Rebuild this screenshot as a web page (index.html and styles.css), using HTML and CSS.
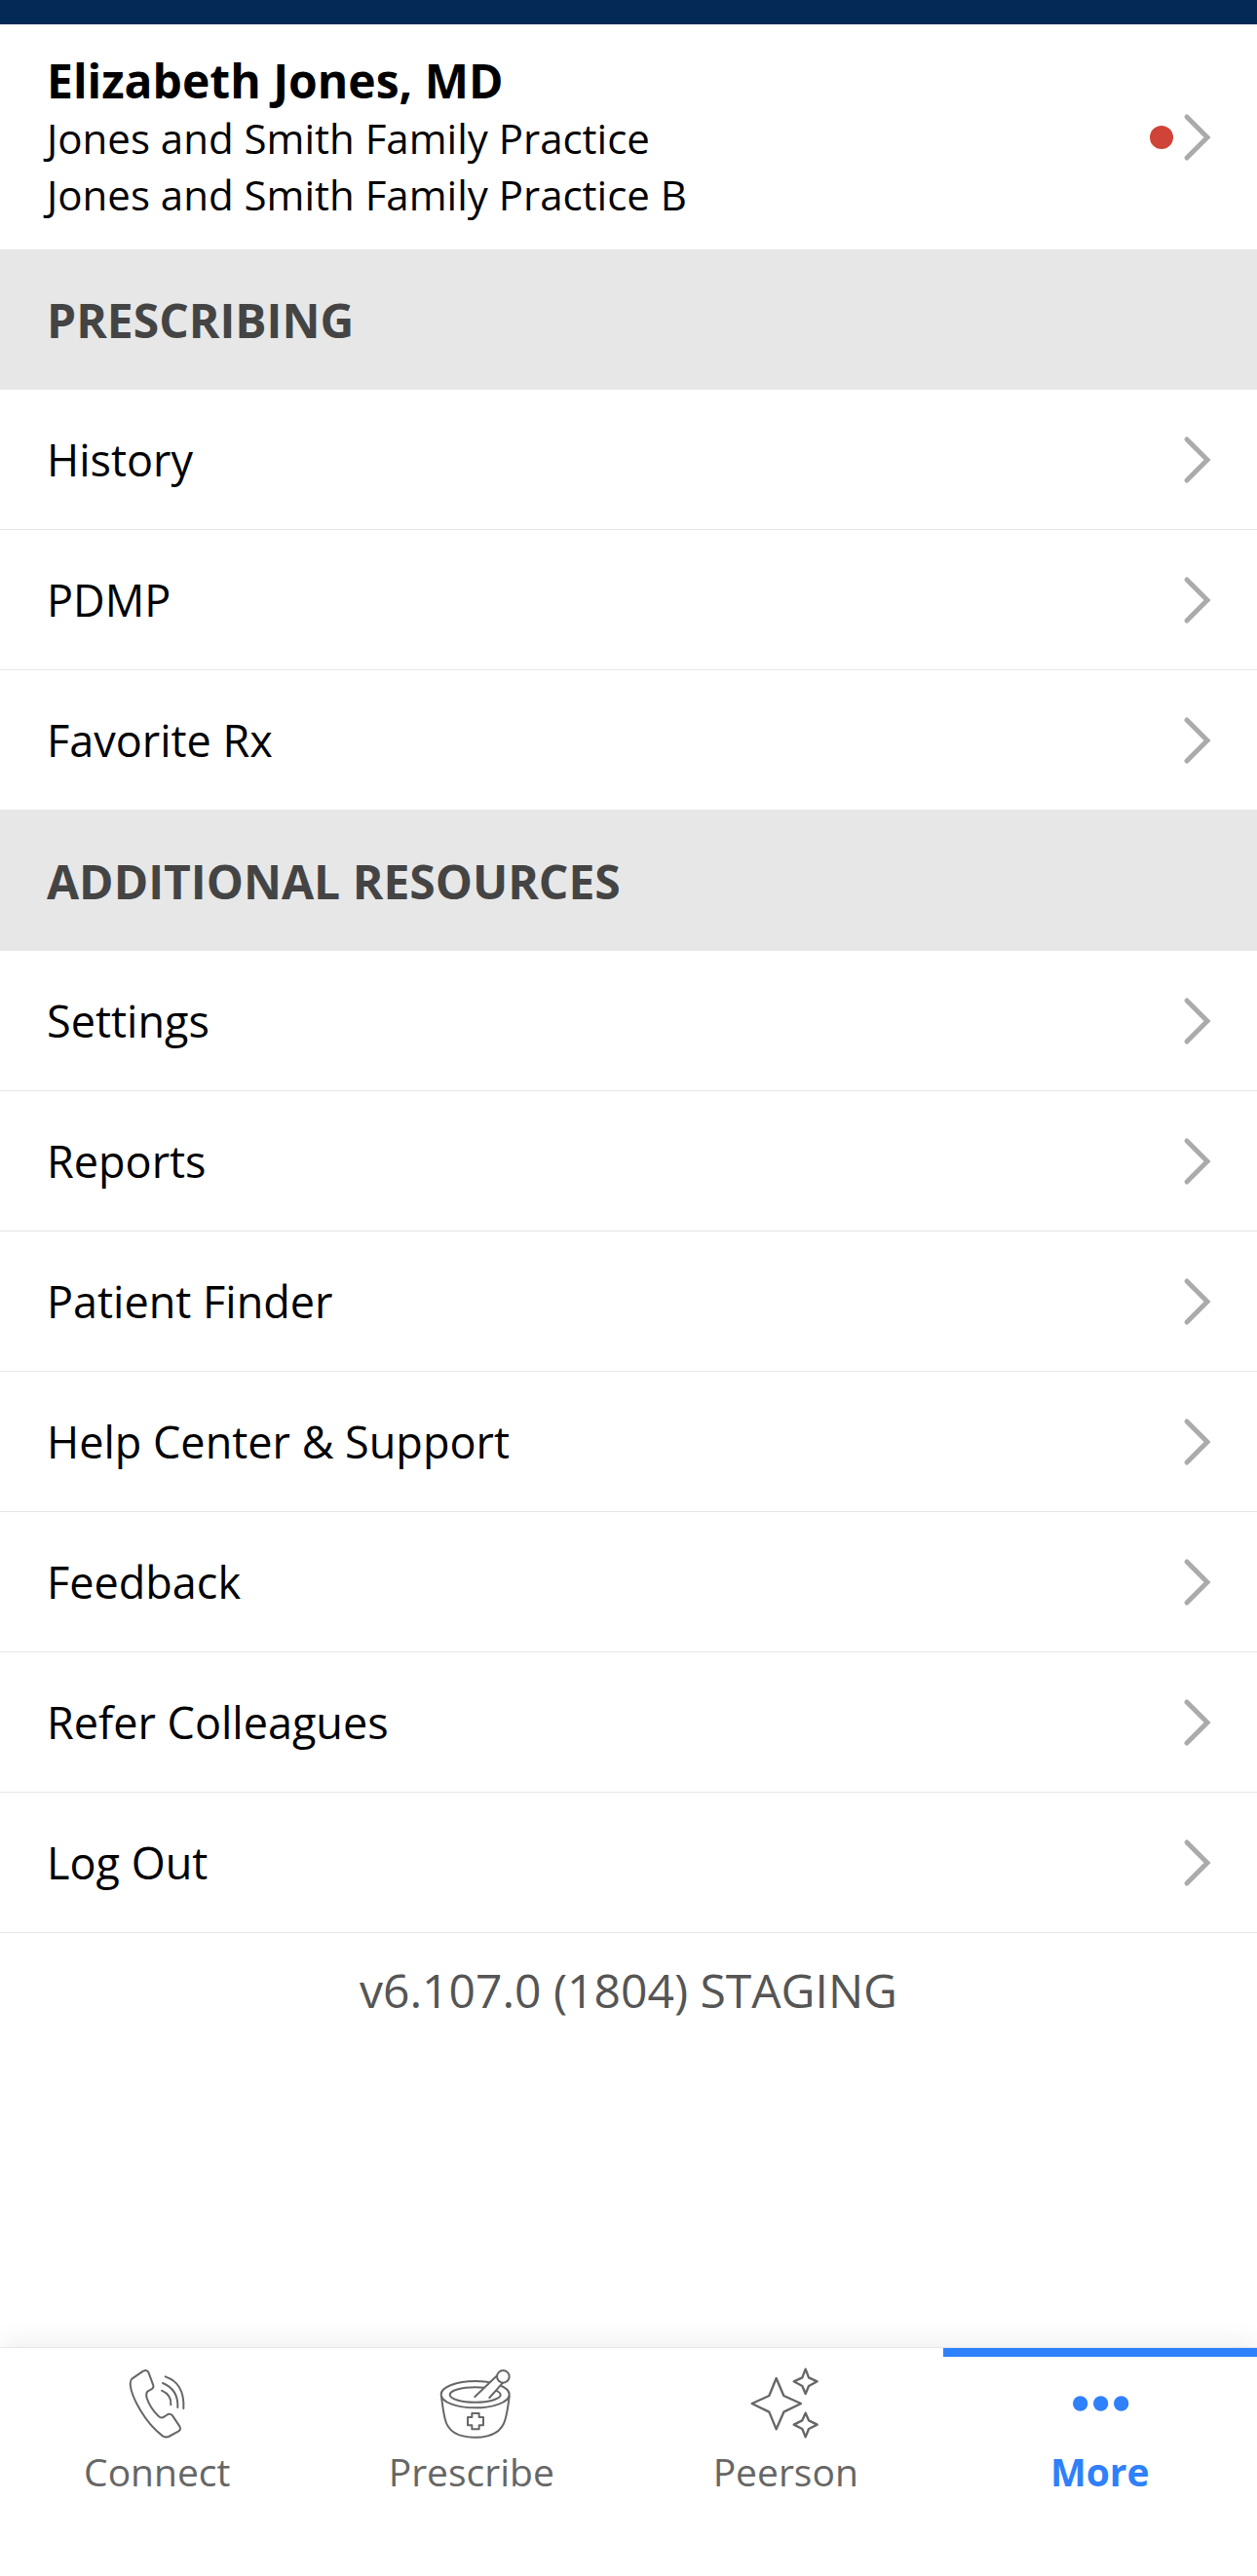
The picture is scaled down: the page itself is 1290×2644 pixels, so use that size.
FILE: index.html
```html
<!DOCTYPE html>
<html lang="en">
<head>
<meta charset="utf-8">
<title>More</title>
<link rel="stylesheet" href="styles.css">
</head>
<body>
<svg class="defs" width="0" height="0" aria-hidden="true"><defs>
<symbol id="chev" viewBox="0 0 34 52"><path d="M5 5 L26 26 L5 47" fill="none" stroke="#ababab" stroke-width="5" stroke-linecap="round" stroke-linejoin="miter"/></symbol>
</defs></svg>
<div class="app">
  <div class="statusbar"></div>
  <main class="content">
    <a class="profile">
      <div class="profile-text">
        <div class="profile-name">Elizabeth Jones, MD</div>
        <div class="profile-line">Jones and Smith Family Practice</div>
        <div class="profile-line">Jones and Smith Family Practice B</div>
      </div>
      <span class="dot"></span>
      <svg class="chev"><use href="#chev"/></svg>
    </a>
    <h2 class="section">PRESCRIBING</h2>
    <a class="row"><span>History</span><svg class="chev"><use href="#chev"/></svg></a>
    <a class="row"><span>PDMP</span><svg class="chev"><use href="#chev"/></svg></a>
    <a class="row"><span>Favorite Rx</span><svg class="chev"><use href="#chev"/></svg></a>
    <h2 class="section">ADDITIONAL RESOURCES</h2>
    <a class="row"><span>Settings</span><svg class="chev"><use href="#chev"/></svg></a>
    <a class="row"><span>Reports</span><svg class="chev"><use href="#chev"/></svg></a>
    <a class="row"><span>Patient Finder</span><svg class="chev"><use href="#chev"/></svg></a>
    <a class="row"><span>Help Center &amp; Support</span><svg class="chev"><use href="#chev"/></svg></a>
    <a class="row"><span>Feedback</span><svg class="chev"><use href="#chev"/></svg></a>
    <a class="row"><span>Refer Colleagues</span><svg class="chev"><use href="#chev"/></svg></a>
    <a class="row"><span>Log Out</span><svg class="chev"><use href="#chev"/></svg></a>
    <div class="version">v6.107.0 (1804) STAGING</div>
  </main>
  <nav class="tabs">
    <a class="tab">
      <svg class="tab-icon" viewBox="0 0 300 285"><g fill="none" stroke="#666" stroke-width="6" stroke-linecap="round" stroke-linejoin="round">
        <path d="M73 92 L108 68 Q120 62 125 74 L139 112 Q141 120 133 124 L122 130 Q116 135 118 148 Q128 182 156 208 Q163 214 172 209 L184 201 Q192 198 198 205 L220 238 Q225 248 217 253 L186 270 Q177 273 168 268 Q130 240 100 190 Q70 140 68 108 Q68 97 73 92 Z"/>
        <path d="M176 85 Q236 105 232 183"/>
        <path d="M168 105 Q217 125 214 180"/>
        <path d="M165 128 Q196 142 193 172"/>
      </g></svg>
      <span class="tab-label">Connect</span>
    </a>
    <a class="tab">
      <svg class="tab-icon" viewBox="0 0 300 285"><g fill="none" stroke="#666" stroke-width="6" stroke-linecap="round" stroke-linejoin="round">
        <ellipse cx="161" cy="140" rx="105" ry="41"/>
        <ellipse cx="161" cy="141" rx="78" ry="23"/>
        <path d="M57 146 Q62 190 68 215 Q80 272 160 272 Q240 272 254 215 Q261 190 266 146"/>
        <path d="M151 210 V198 H173 V210 H186 V235 H173 V247 H151 V235 H138 V210 Z"/>
        <path d="M158 148 L226 80 L250 104 L205 152" fill="#fff" stroke="none"/>
        <path d="M160 147 L226 84"/>
        <path d="M205 150 L246 104"/>
        <circle cx="247" cy="85" r="19" fill="#fff"/>
      </g></svg>
      <span class="tab-label">Prescribe</span>
    </a>
    <a class="tab">
      <svg class="tab-icon" viewBox="0 0 300 285"><g fill="none" stroke="#666" stroke-width="7" stroke-linecap="round" stroke-linejoin="round">
        <path d="M122 90 L145 144 L198 168 L145 194 L122 247 L100 194 L47 168 L100 144 Z"/>
        <path d="M212 62 L222 88 L248 100 L222 114 L212 138 L202 114 L176 100 L202 88 Z"/>
        <path d="M212 197 L222 220 L248 233 L222 246 L212 271 L202 246 L176 233 L202 220 Z"/>
      </g></svg>
      <span class="tab-label">Peerson</span>
    </a>
    <a class="tab active">
      <svg class="tab-icon" viewBox="0 0 300 285"><g fill="#2f80fb">
        <circle cx="89" cy="168" r="23"/>
        <circle cx="152" cy="168" r="23"/>
        <circle cx="215" cy="168" r="23"/>
      </g></svg>
      <span class="tab-label">More</span>
    </a>
  </nav>
</div>
</body>
</html>
```
FILE: styles.css
```css
* { box-sizing: border-box; }
html, body { margin: 0; padding: 0; background: #fff; }
body { font-family: "Open Sans", "Noto Sans", sans-serif; color: #000; }
.defs { display: block; height: 0; }
.app { width: 1290px; height: 2644px; display: flex; flex-direction: column; overflow: hidden; }
.statusbar { height: 25px; background: #032a57; flex: none; }
.content { flex: 1; display: flex; flex-direction: column; }
.profile { height: 231px; display: flex; align-items: center; padding: 0 43px 0 48px; flex: none; }
.profile-text { flex: 1; }
.profile-name { font-size: 48px; font-weight: 700; line-height: 60px; }
.profile-line { font-size: 42px; line-height: 58px; }
.dot { width: 24px; height: 24px; border-radius: 50%; background: #d04437; margin-right: 9px; }
.chev { width: 34px; height: 52px; flex: none; }
.section { margin: 0; height: 144px; background: #e7e7e7; display: flex; align-items: center; padding-left: 48px; font-size: 48px; font-weight: 700; color: #444; flex: none; }
.row { height: 144px; display: flex; align-items: center; justify-content: space-between; padding: 0 43px 0 48px; font-size: 45px; border-bottom: 1px solid #e6e6e6; flex: none; }
.version { text-align: center; font-size: 48px; color: #555; line-height: 60px; margin-top: 29px; }
.tabs { height: 235px; flex: none; display: grid; grid-template-columns: repeat(4, 1fr); border-top: 1px solid #e6e6e6; box-shadow: 0 -8px 24px rgba(0,0,0,0.06); background: #fff; }
.tab { display: flex; flex-direction: column; align-items: center; border-top: 9px solid transparent; color: #666; }
.tab.active { border-top-color: #2f80fb; color: #2f80fb; font-weight: 700; }
.tab-icon { width: 100px; height: 95px; margin-top: -8px; flex: none; }
.tab-label { font-size: 39px; line-height: 52px; margin-top: 5px; }
```
